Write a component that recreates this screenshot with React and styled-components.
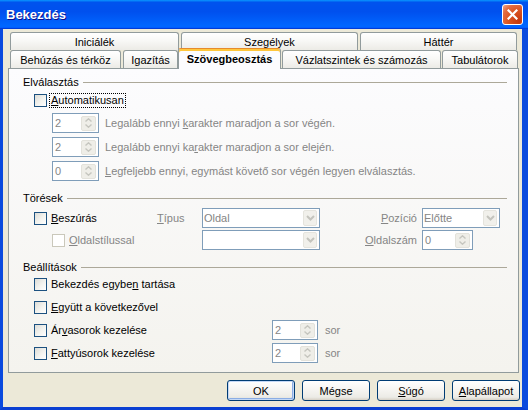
import React from "react";
import styled, { createGlobalStyle, css } from "styled-components";

const FONT = `"Liberation Sans", Arial, sans-serif`;
const GRAY = "#858585";

const GlobalStyle = createGlobalStyle`
  *, *::before, *::after { box-sizing: border-box; }
  html, body { margin: 0; padding: 0; background: #ECE9D8; }
  body { font-family: ${FONT}; font-size: 11px; color: #000; }
`;

const Window = styled.div`
  width: 528px;
  height: 410px;
  display: flex;
  flex-direction: column;
  overflow: hidden;
`;

const TitleBar = styled.div`
  height: 29px;
  flex: none;
  display: flex;
  align-items: center;
  justify-content: space-between;
  padding: 0 5px 0 6px;
  background: linear-gradient(
    180deg,
    #0997ff 0%,
    #0053ee 8%,
    #0050ee 40%,
    #0066ff 88%,
    #0066ff 93%,
    #005bff 95%,
    #003dd7 96%,
    #003dd7 100%
  );
`;

const Title = styled.span`
  color: #fff;
  font-weight: bold;
  font-size: 13px;
  text-shadow: 1px 1px #0f1089;
`;

const CloseButton = styled.div`
  width: 21px;
  height: 21px;
  border: 1px solid #fff;
  border-radius: 3px;
  background: radial-gradient(circle at 85% 85%, #c5380f 0%, #d9521f 45%, #e26c42 75%, #f0a88c 100%);
  display: flex;
  align-items: center;
  justify-content: center;
`;

const Frame = styled.div`
  flex: 1;
  display: flex;
  flex-direction: column;
  background: #ece9d8;
  border-left: 3px solid #0a4ade;
  border-right: 6px solid #0a4ade;
  border-bottom: 3px solid #0a3fd2;
  padding: 3px 3px 6px 5px;
`;

const TabRow = styled.div`
  display: flex;
  align-items: flex-end;
  height: 18px;
  padding-left: 2px;
  position: relative;
  z-index: 1;
`;

const Tab = styled.div`
  flex: none;
  width: ${(p) => p.$w}px;
  height: 18px;
  margin-left: ${(p) => p.$ml || 0}px;
  border: 1px solid #919b9c;
  border-bottom: none;
  border-radius: 3px 3px 0 0;
  background: linear-gradient(180deg, #ffffff 0%, #f8f8f6 45%, #ecebe6 100%);
  display: flex;
  align-items: center;
  justify-content: center;
  white-space: nowrap;
  padding-top: 1px;
`;

const ActiveTab = styled(Tab)`
  height: 21px;
  margin-bottom: -1px;
  position: relative;
  z-index: 2;
  font-weight: bold;
  background: #fcfcfe;
  border-top: 1px solid #e68b2c;
  box-shadow: inset 0 2px 0 #ffc73c;
  padding-top: 0;
`;

const Panel = styled.div`
  flex: 1;
  position: relative;
  z-index: 0;
  border: 1px solid #919b9c;
  background: linear-gradient(180deg, #fcfcfe 0%, #f4f3ee 100%);
  padding: 6px 11px 0 14px;
  display: flex;
  flex-direction: column;
`;

const Legend = styled.div`
  display: flex;
  align-items: center;
  gap: 4px;
  height: 14px;
  line-height: 14px;
  margin-top: ${(p) => p.$mt || 0}px;
  &::after {
    content: "";
    flex: 1;
    height: 0;
    border-top: 1px solid #aca899;
  }
`;

const CheckRow = styled.div`
  display: flex;
  align-items: center;
  height: ${(p) => p.$h || 15}px;
  margin-top: ${(p) => p.$mt || 0}px;
  margin-left: ${(p) => p.$ml || 0}px;
`;

const Box = styled.span`
  width: 13px;
  height: 13px;
  flex: none;
  border: 1px solid ${(p) => (p.$disabled ? "#cac8bb" : "#1c5180")};
  background: ${(p) =>
    p.$disabled ? "#ffffff" : "linear-gradient(135deg, #dcdcd7 0%, #f3f3ef 55%, #ffffff 100%)"};
`;

const CheckLabel = styled.span`
  margin-left: 2px;
  padding: 0 1px;
  border: 1px dotted ${(p) => (p.$focus ? "#000" : "transparent")};
  line-height: 13px;
  white-space: nowrap;
  color: ${(p) => (p.$disabled ? GRAY : "#000")};
`;

const SpinList = styled.div`
  display: flex;
  flex-direction: column;
  gap: 4px;
  margin: 5px 0 0 29px;
`;

const SpinRow = styled.div`
  display: flex;
  align-items: center;
  gap: 6px;
  height: 20px;
  color: ${GRAY};
  white-space: nowrap;
`;

const Field = styled.div`
  flex: none;
  width: ${(p) => p.$w}px;
  height: 20px;
  border: 1px solid #7f9db9;
  background: #fff;
  display: flex;
  align-items: center;
  justify-content: space-between;
  padding: 0 2px 0 ${(p) => (p.$combo ? 1 : 2)}px;
  color: ${GRAY};
  white-space: nowrap;
`;

const SpinBtn = styled.span`
  width: 15px;
  height: 15px;
  border-radius: 2px;
  background: #efeee8;
  border: 1px solid #e3e2db;
  display: flex;
  flex-direction: column;
  align-items: center;
  justify-content: center;
  gap: 2px;
`;

const DropBtn = styled.span`
  width: 14px;
  height: 16px;
  border-radius: 2px;
  background: #f1f0eb;
  border: 1px solid #e5e4dd;
  display: flex;
  align-items: center;
  justify-content: center;
`;

const BreakGrid = styled.div`
  display: grid;
  grid-template-columns: 123px 45px 118px 102px 78px;
  grid-template-rows: 20px 20px;
  row-gap: 2px;
  align-items: center;
  margin: 3px 0 0 11px;
`;

const SideLabel = styled.span`
  color: ${GRAY};
  justify-self: ${(p) => (p.$end ? "end" : "start")};
  padding-right: ${(p) => (p.$end ? 5 : 0)}px;
  white-space: nowrap;
`;

const OptGrid = styled.div`
  display: grid;
  grid-template-columns: 238px 46px auto;
  grid-template-rows: repeat(4, 20px);
  row-gap: 3px;
  align-items: center;
  margin-left: 11px;
`;

const Unit = styled.span`
  color: ${GRAY};
  margin-left: 7px;
`;

const ButtonRow = styled.div`
  display: flex;
  justify-content: flex-end;
  gap: 7px;
  margin: 7px -1px 0 0;
`;

const Button = styled.button`
  width: 68px;
  height: 21px;
  padding: 0;
  font: 11px ${FONT};
  color: #000;
  border: 1px solid #003c74;
  border-radius: 3px;
  background: linear-gradient(180deg, #ffffff 0%, #f7f6f3 40%, #ecebe6 85%, #d6d0c5 100%);
  ${(p) =>
    p.$default &&
    css`
      box-shadow: inset 0 0 0 1px #c4d8f6, inset -1px -1px 0 1px #8bade4;
    `}
`;

const SpinArrows = () => (
  <SpinBtn>
    <svg width="7" height="4" viewBox="0 0 7 4">
      <polyline points="0.5,3.5 3.5,0.8 6.5,3.5" fill="none" stroke="#c6c6bf" strokeWidth="1.4" />
    </svg>
    <svg width="7" height="4" viewBox="0 0 7 4">
      <polyline points="0.5,0.5 3.5,3.2 6.5,0.5" fill="none" stroke="#c6c6bf" strokeWidth="1.4" />
    </svg>
  </SpinBtn>
);

const Spin = ({ w, value }) => (
  <Field $w={w}>
    <span>{value}</span>
    <SpinArrows />
  </Field>
);

const Combo = ({ w, value }) => (
  <Field $w={w} $combo>
    <span>{value}</span>
    <DropBtn>
      <svg width="9" height="6" viewBox="0 0 9 6">
        <polyline points="1,1 4.5,4.5 8,1" fill="none" stroke="#c4c4bd" strokeWidth="2" />
      </svg>
    </DropBtn>
  </Field>
);

const Check = ({ children, focus, disabled, ml, mt, h }) => (
  <CheckRow $ml={ml} $mt={mt} $h={h}>
    <Box $disabled={disabled} />
    <CheckLabel $focus={focus} $disabled={disabled}>
      {children}
    </CheckLabel>
  </CheckRow>
);

const topTabs = [
  { label: "Iniciálék", w: 169 },
  { label: "Szegélyek", w: 177, ml: 2 },
  { label: "Háttér", w: 157, ml: 2 },
];

const bottomTabs = [
  { label: "Behúzás és térköz", w: 111 },
  { label: "Igazítás", w: 55, ml: 2 },
  { label: "Szövegbeosztás", w: 103, active: true },
  { label: "Vázlatszintek és számozás", w: 159, ml: 1 },
  { label: "Tabulátorok", w: 76, ml: 1 },
];

export default function App() {
  return (
    <>
      <GlobalStyle />
      <Window>
        <TitleBar>
          <Title>Bekezdés</Title>
          <CloseButton>
            <svg width="11" height="11" viewBox="0 0 11 11">
              <path d="M1.5 1.5 L9.5 9.5 M9.5 1.5 L1.5 9.5" stroke="#fff" strokeWidth="2.2" strokeLinecap="square" />
            </svg>
          </CloseButton>
        </TitleBar>
        <Frame>
          <TabRow>
            {topTabs.map((t) => (
              <Tab key={t.label} $w={t.w} $ml={t.ml}>
                {t.label}
              </Tab>
            ))}
          </TabRow>
          <TabRow>
            {bottomTabs.map((t) =>
              t.active ? (
                <ActiveTab key={t.label} $w={t.w} $ml={t.ml}>
                  {t.label}
                </ActiveTab>
              ) : (
                <Tab key={t.label} $w={t.w} $ml={t.ml}>
                  {t.label}
                </Tab>
              )
            )}
          </TabRow>
          <Panel>
            <Legend>Elválasztás</Legend>
            <Check ml={11} mt={4} focus>
              <u>A</u>utomatikusan
            </Check>
            <SpinList>
              <SpinRow>
                <Spin w={47} value="2" />
                <span>
                  Legalább ennyi <u>k</u>arakter maradjon a sor végén.
                </span>
              </SpinRow>
              <SpinRow>
                <Spin w={47} value="2" />
                <span>
                  Legalább ennyi ka<u>r</u>akter maradjon a sor elején.
                </span>
              </SpinRow>
              <SpinRow>
                <Spin w={47} value="0" />
                <span>
                  <u>L</u>egfeljebb ennyi, egymást követő sor végén legyen elválasztás.
                </span>
              </SpinRow>
            </SpinList>

            <Legend $mt={10}>Törések</Legend>
            <BreakGrid>
              <Check>
                <u>B</u>eszúrás
              </Check>
              <SideLabel>
                <u>T</u>ípus
              </SideLabel>
              <Combo w={118} value="Oldal" />
              <SideLabel $end>
                <u>P</u>ozíció
              </SideLabel>
              <Combo w={78} value="Előtte" />

              <Check ml={18} disabled>
                <u>O</u>ldalstílussal
              </Check>
              <span />
              <Combo w={118} value="" />
              <SideLabel $end>
                <u>O</u>ldalszám
              </SideLabel>
              <Spin w={51} value="0" />
            </BreakGrid>

            <Legend $mt={10}>Beállítások</Legend>
            <OptGrid>
              <Check>
                Bekezdés egybe<u>n</u> tartása
              </Check>
              <span />
              <span />
              <Check>
                <u>E</u>gyütt a következővel
              </Check>
              <span />
              <span />
              <Check>
                Ár<u>v</u>asorok kezelése
              </Check>
              <Spin w={46} value="2" />
              <Unit>sor</Unit>
              <Check>
                <u>F</u>attyúsorok kezelése
              </Check>
              <Spin w={46} value="2" />
              <Unit>sor</Unit>
            </OptGrid>
          </Panel>
          <ButtonRow>
            <Button $default>OK</Button>
            <Button>Mégse</Button>
            <Button>
              <u>S</u>úgó
            </Button>
            <Button>
              <u>A</u>lapállapot
            </Button>
          </ButtonRow>
        </Frame>
      </Window>
    </>
  );
}
